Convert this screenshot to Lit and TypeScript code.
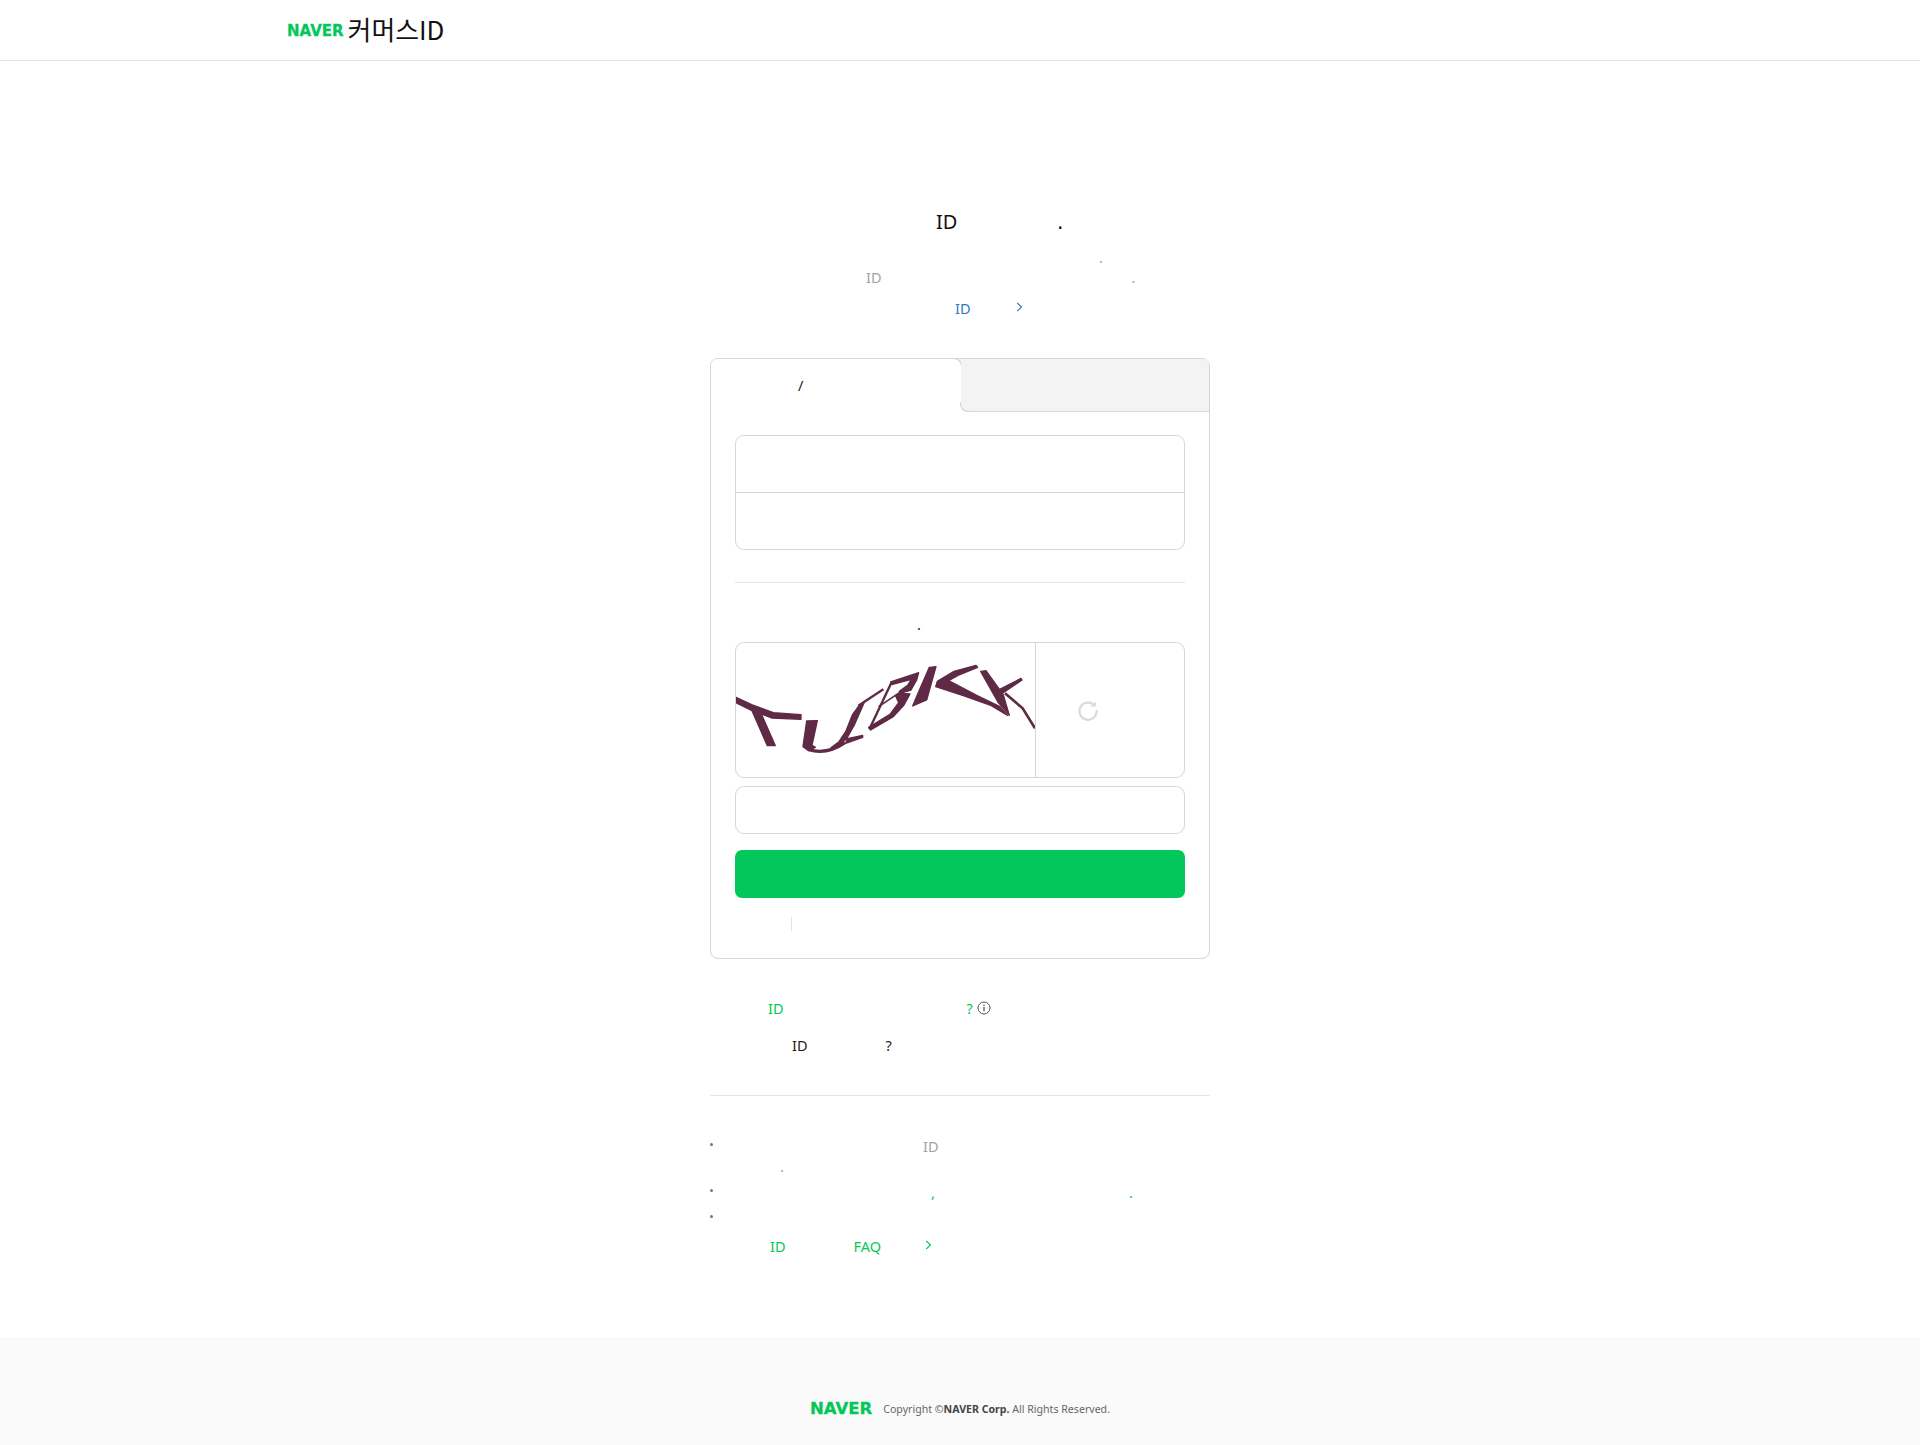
import { LitElement, html, css } from "lit";
import { customElement } from "lit/decorators.js";

type Seg = string | number;

const row = (segs: Seg[], cls = "") => html`<div class="row ${cls}">${segs.map((s) =>
  typeof s === "number" ? html`<span class="sp" style="width:${s}px"></span>` : html`<span>${s}</span>`
)}</div>`;

const chevron = html`<svg class="chev" width="7" height="10" viewBox="0 0 7 10"><path d="M1.2 .8 5.4 5 1.2 9.2" fill="none" stroke="currentColor" stroke-width="1.2"/></svg>`;

@customElement("app-root")
export class AppRoot extends LitElement {
  static styles = css`
    :host { display: block; font-family: "Noto Sans", "Noto Sans CJK KR", sans-serif; background: #fff; color: #222; }
    .top { height: 60px; border-bottom: 1px solid #e5e5e5; display: flex; align-items: center; padding-left: 287px; gap: 4px; }
    .nv { font-family: "DejaVu Sans", sans-serif; font-weight: 700; color: #03c75a; -webkit-text-stroke: .3px #03c75a; }
    .top .nv { font-size: 15px; margin-top: 2px; }
    .cm { font-family: "Noto Sans CJK KR", sans-serif; font-size: 25.9px; line-height: 36px; color: #111; margin-top: -2px; }
    main { width: 500px; margin: 0 auto; padding-top: 147px; }
    .row { font-size: 14.5px; line-height: 20px; white-space: pre; }
    .sp { display: inline-block; height: 1px; }
    .chev { display: inline-block; vertical-align: 2px; }
    .row.h { font-size: 20px; line-height: 28px; margin-bottom: 11px; color: #111; }
    .gray { color: #a3a3a3; }
    .blue { color: #2d79c7; }
    .green { color: #03c75a; }
    .m11 { margin-top: 11px; }
    .card { margin-top: 40px; border: 1px solid #d6d6d6; border-radius: 8px; height: 601px; box-sizing: border-box; }
    .tabs { display: grid; grid-template-columns: 250px 248px; height: 53px; border-radius: 7px 7px 0 0; background: linear-gradient(#f3f3f3 50%, #fff 50%); }
    .tab1 { background: #fff; border-radius: 7px 8px 0 0; position: relative; padding-top: 16px; box-sizing: border-box; }
    .tab1::after { content: ""; position: absolute; right: -1px; top: -1px; bottom: 8px; width: 10px; border-top: 1px solid #d6d6d6; border-right: 1px solid #d6d6d6; border-top-right-radius: 8px; box-sizing: border-box; }
    .tab2 { background: #f3f3f3; border-bottom: 1px solid #d6d6d6; border-radius: 0 7px 0 8px; position: relative; }
    .tab2::before { content: ""; position: absolute; left: -1px; bottom: -1px; width: 10px; height: 10px; border-left: 1px solid #d6d6d6; border-bottom: 1px solid #d6d6d6; border-bottom-left-radius: 8px; box-sizing: border-box; }
    .body { padding: 23px 24px 0; }
    .group { border: 1px solid #d6d6d6; border-radius: 9px; height: 115px; box-sizing: border-box; display: grid; grid-template-rows: 56px 1fr; }
    .group div + div { border-top: 1px solid #d6d6d6; }
    .rule { height: 1px; background: #e5e5e5; }
    .body .rule { margin-top: 32px; }
    .capt-t { margin-top: 31px; }
    .capt { margin-top: 8px; height: 136px; border: 1px solid #d6d6d6; border-radius: 9px; box-sizing: border-box; display: grid; grid-template-columns: 299px 1fr; overflow: hidden; }
    .capt svg.img { display: block; width: 299px; height: 134px; }
    .cap-fill { fill: #5e2a45; stroke: #5e2a45; stroke-width: 4; stroke-linejoin: round; }
    .cap-line { fill: none; stroke: #5e2a45; }
    .refresh { border-left: 1px solid #d6d6d6; display: flex; align-items: center; padding-left: 41px; }
    .inp { margin-top: 8px; height: 48px; border: 1px solid #d6d6d6; border-radius: 9px; box-sizing: border-box; }
    .btn { margin-top: 16px; height: 48px; border-radius: 7px; background: #03c75a; }
    .links { margin-top: 19px; padding-left: 56px; }
    .links i { display: block; width: 1px; height: 14px; background: #e5e5e5; }
    .after { margin-top: 39px; display: flex; align-items: center; }
    .info { margin-left: 4px; }
    .q2 { margin-top: 17px; }
    main > .rule { margin-top: 40px; }
    ul { list-style: none; margin: 40px 0 0; padding: 0; }
    li { position: relative; }
    .dot { display: block; width: 3px; height: 3px; border-radius: 50%; background: #777; position: absolute; left: 0; top: 7px; }
    .l3 { margin-top: 6px; }
    .l4 { margin-top: 6px; height: 20px; }
    .l5 { margin-top: 8px; }
    footer { margin-top: 81px; height: 108px; background: #fafafa; box-sizing: border-box; padding-top: 62px; display: flex; justify-content: center; gap: 11px; align-items: flex-start; }
    footer .nv { font-size: 16.5px; line-height: 20px; }
    footer .c { font-size: 10.6px; line-height: 20px; color: #666; }
    footer b { color: #444; }
  `;

  render() {
    return html`
      <header class="top">
        <span class="nv">NAVER</span><span class="cm">커머스ID</span>
      </header>
      <main>
        ${row([226, "ID", 100, "."], "h")}
        ${row([389, "."], "gray")}
        ${row([156, "ID", 250, "."], "gray")}
        <div class="row blue m11"><span class="sp" style="width:245px"></span><span>ID</span><span class="sp" style="width:45px"></span>${chevron}</div>
        <section class="card">
          <div class="tabs">
            <div class="tab1">${row([87, "/"])}</div>
            <div class="tab2"></div>
          </div>
          <div class="body">
            <div class="group"><div></div><div></div></div>
            <div class="rule"></div>
            ${row([182, "."], "capt-t")}
            <div class="capt">
              <svg class="img" viewBox="18 9 897 402" preserveAspectRatio="none">
                <g class="cap-fill">
                  <path d="M18 172 65 194 130 218 213 224 213 238 125 234 94 222 136 317 112 317 66 212 18 188Z"/>
                  <path d="M230 243 262 242 246 316 256 322 236 332 219 320Z"/>
                </g>
                <path class="cap-line" d="M234 328C270 340 310 332 345 308" stroke-width="10"/>
                <g transform="translate(300 60)">
                  <g class="cap-fill">
                    <path d="M87 137 103 127 73 195 50 236 20 260 2 270 2 264 27 245 47 215 67 165Z"/>
                    <path d="M52 236 98 226 98 232 47 250Z"/>
                    <path d="M182 66 266 38 260 60 243 90 207 101 208 94 233 76 244 58 185 74Z"/>
                    <path d="M298 22 318 20 290 120 248 138 266 95Z"/>
                    <path d="M322 64 372 34 438 16 443 22 384 46 356 62 440 106 510 140 533 166 480 135 400 107 317 80Z"/>
                    <path d="M452 34 468 32 520 105 538 166 505 128Z"/>
                    <path d="M573 55 576 60 510 105 490 98Z"/>
                    <path d="M207 100 240 102 222 135 190 170 122 210 116 202 180 163 206 128 197 108Z"/>
                  </g>
                  <g class="cap-line">
                    <path d="M85 137 160 88" stroke-width="7"/>
                    <path d="M118 208 184 68" stroke-width="7"/>
                    <path d="M146 140 205 100" stroke-width="5"/>
                    <path d="M525 100 578 145 615 205" stroke-width="8"/>
                  </g>
                </g>
              </svg>
              <div class="refresh">
                <svg width="22" height="22" viewBox="0 0 22 22"><path d="M17.6 6.6A8.6 8.6 0 1 0 19.6 11" fill="none" stroke="#dadada" stroke-width="2.2"/><path d="M18.8 2.4V7.6H13.6Z" fill="#dadada"/></svg>
              </div>
            </div>
            <div class="inp"></div>
            <div class="btn"></div>
            <div class="links"><i></i></div>
          </div>
        </section>
        <div class="row after green"><span class="sp" style="width:58px"></span><span>ID</span><span class="sp" style="width:183px"></span><span>?</span>
          <svg class="info" width="14" height="14" viewBox="0 0 14 14"><circle cx="7" cy="7" r="6" fill="none" stroke="#555" stroke-width="1"/><path d="M7 6v4.2M7 3.6v1.4" stroke="#555" stroke-width="1.3"/></svg>
        </div>
        ${row([82, "ID", 78, "?"], "q2")}
        <div class="rule"></div>
        <ul>
          <li class="gray"><span class="dot"></span>${row([213, "ID"])}${row([70, "."])}</li>
          <li class="l3 green"><span class="dot"></span>${row([221, ",", 194, "."])}</li>
          <li class="l4"><span class="dot"></span></li>
          <li class="l5 green"><div class="row"><span class="sp" style="width:60px"></span><span>ID</span><span class="sp" style="width:68px"></span><span>FAQ</span><span class="sp" style="width:44px"></span>${chevron}</div></li>
        </ul>
      </main>
      <footer>
        <span class="nv">NAVER</span>
        <span class="c">Copyright ©<b>NAVER Corp.</b> All Rights Reserved.</span>
      </footer>
    `;
  }
}
